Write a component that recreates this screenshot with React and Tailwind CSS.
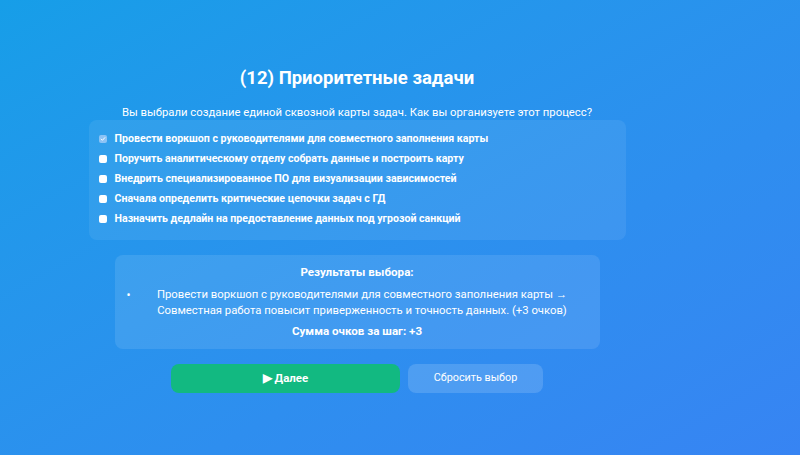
import React, { useState } from "react";

const options = [
  "Провести воркшоп с руководителями для совместного заполнения карты",
  "Поручить аналитическому отделу собрать данные и построить карту",
  "Внедрить специализированное ПО для визуализации зависимостей",
  "Сначала определить критические цепочки задач с ГД",
  "Назначить дедлайн на предоставление данных под угрозой санкций",
];

const Box = ({ checked }) =>
  checked ? (
    <span className="w-[8px] h-[8px] rounded-[2px] bg-[#8cc3f5] flex items-center justify-center shrink-0">
      <svg width="6" height="6" viewBox="0 0 10 10" fill="none">
        <path d="M2 5.2l2 2 4-4.4" stroke="#ffffff" strokeWidth="1.6" strokeLinecap="round" strokeLinejoin="round" />
      </svg>
    </span>
  ) : (
    <span className="w-[8px] h-[8px] rounded-[2px] bg-white shrink-0" />
  );

const App = () => {
  const [selected] = useState(0);

  return (
    <div
      className="w-[800px] h-[455px] bg-gradient-to-br from-[#169ee8] to-[#3784f3] text-white overflow-hidden"
      style={{ fontFamily: "Roboto, Arial, sans-serif" }}
    >
      <div className="w-[714px] flex flex-col items-center pt-[66px]">
        <h1 className="text-[18.5px] font-bold leading-6">(12) Приоритетные задачи</h1>
        <p className="text-[11.3px] leading-[14px] mt-[16px]">
          Вы выбрали создание единой сквозной карты задач. Как вы организуете этот процесс?
        </p>

        <div className="w-[537px] rounded-lg bg-white/[0.07] pl-[10px] pt-[9px] pb-[11px] flex flex-col">
          {options.map((o, i) => (
            <label key={i} className="flex items-center gap-[8px] h-5">
              <Box checked={i === selected} />
              <span className="text-[10.6px] font-bold leading-4">{o}</span>
            </label>
          ))}
        </div>

        <div className="w-[485px] mt-[15px] rounded-lg bg-white/[0.1] pt-[9px] pb-[10px] flex flex-col items-center">
          <p className="text-[11.6px] font-bold leading-4">Результаты выбора:</p>
          <div className="w-full mt-[7px] pl-[12px] pr-[6px] flex items-start">
            <span className="text-[12px] leading-4">•</span>
            <span className="flex-1 text-center text-[11.3px] leading-4">
              Провести воркшоп с руководителями для совместного заполнения карты →
              <br />
              Совместная работа повысит приверженность и точность данных. (+3 очков)
            </span>
          </div>
          <p className="text-[11.6px] font-bold leading-4 mt-[4px]">Сумма очков за шаг: +3</p>
        </div>

        <div className="flex gap-2 mt-[15px]">
          <button className="w-[229px] h-[29px] rounded-lg bg-[#12b981] text-[11.5px] font-bold flex items-center justify-center">
            ▶ Далее
          </button>
          <button className="w-[135px] h-[29px] rounded-lg bg-white/[0.15] text-[10.8px] flex items-center justify-center">
            Сбросить выбор
          </button>
        </div>
      </div>
    </div>
  );
};

export default App;
